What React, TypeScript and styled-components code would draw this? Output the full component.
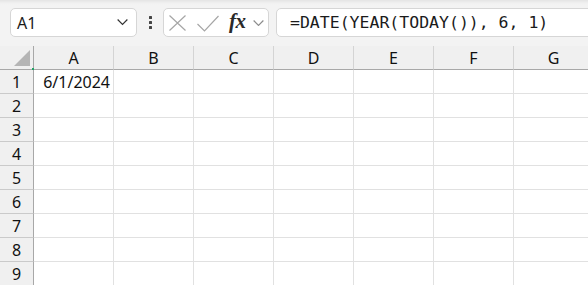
import React from "react";
import styled, { createGlobalStyle } from "styled-components";

const Global = createGlobalStyle`
  html, body { margin: 0; padding: 0; background: #ffffff; overflow: hidden; }
  #root { width: 588px; height: 285px; overflow: hidden; }
`;

const Page = styled.div`
  width: 588px;
  height: 285px;
  overflow: hidden;
  font-family: "Noto Sans", "Segoe UI", sans-serif;
  color: #1b1b1b;
`;

const Toolbar = styled.div`
  height: 46px;
  box-sizing: border-box;
  background: linear-gradient(#e4e4e4 0px, #f0f0f0 3px, #f3f3f3 5px);
  padding: 8px 0 0 10px;
  display: flex;
  align-items: flex-start;
`;

const Box = styled.div`
  height: 29px;
  box-sizing: border-box;
  background: #ffffff;
  border: 1px solid #d6d6d6;
  border-radius: 5px;
  display: flex;
  align-items: center;
`;

const NameBox = styled(Box)`
  width: 127px;
  padding: 0 8px 0 6px;
  justify-content: space-between;
  font-size: 16px;
`;

const DotsWrap = styled.div`
  width: 26px;
  height: 29px;
  display: flex;
  flex-direction: column;
  align-items: center;
  justify-content: center;
  gap: 2px;
`;

const Dot = styled.span`
  width: 3px;
  height: 3px;
  background: #444;
  border-radius: 0.5px;
`;

const FxBox = styled(Box)`
  width: 106px;
  padding: 1px 0 0 5px;
`;

const Fx = styled.span`
  font-family: "Liberation Serif", "Times New Roman", serif;
  font-style: italic;
  font-weight: bold;
  font-size: 21px;
  color: #2a2a2a;
  margin: -3px 7px 0 10px;
  letter-spacing: -0.5px;
`;

const FormulaBox = styled(Box)`
  flex: 1;
  margin-left: 7px;
  margin-right: -10px;
  padding-left: 13px;
  font-family: "DejaVu Sans Mono", "Liberation Mono", monospace;
  font-size: 16.5px;
  color: #1b1b1b;
`;

const Grid = styled.div`
  display: grid;
  grid-template-columns: 34px repeat(7, 80px);
  grid-auto-rows: 24px;
`;

const Cell = styled.div<{ $align?: "left" | "right" }>`
  box-sizing: border-box;
  border-right: 1px solid #e1e1e1;
  border-bottom: 1px solid #e1e1e1;
  display: flex;
  align-items: center;
  justify-content: ${(p) => (p.$align === "right" ? "flex-end" : "flex-start")};
  padding: 0 3px 0 3px;
  font-size: 16px;
  color: #111;
  line-height: 1;
`;

const ColHead = styled.div`
  box-sizing: border-box;
  background: #f0f0f0;
  border-right: 1px solid #d4d4d4;
  border-bottom: 1px solid #a8a8a8;
  display: flex;
  align-items: center;
  justify-content: center;
  font-size: 16px;
  color: #111;
  padding-top: 1px;
`;

const Corner = styled.div`
  box-sizing: border-box;
  background: #f0f0f0;
  border-right: 1px solid #a8a8a8;
  border-bottom: 1px solid #a8a8a8;
  display: flex;
  align-items: flex-end;
  justify-content: flex-end;
  padding: 0 3px 3px 0;
  position: relative;
`;

const Triangle = styled.div`
  width: 0;
  height: 0;
  border-left: 16px solid transparent;
  border-bottom: 16px solid #b5b5b5;
`;

const SelMark = styled.span`
  position: absolute;
  right: -1px;
  bottom: -1px;
  width: 2px;
  height: 2px;
  background: #21a366;
`;

const RowHead = styled.div`
  box-sizing: border-box;
  background: #f0f0f0;
  border-right: 1px solid #a8a8a8;
  border-bottom: 1px solid #cacaca;
  display: flex;
  align-items: center;
  justify-content: center;
  font-size: 16px;
  color: #111;
  line-height: 1;
`;

const IconSlot = styled.span<{ $ml: number }>`
  display: flex;
  margin-left: ${(p) => p.$ml}px;
`;

const cols = ["A", "B", "C", "D", "E", "F", "G"];
const rows = [1, 2, 3, 4, 5, 6, 7, 8, 9];

const Chevron = ({ color, w }: { color: string; w: number }) => (
  <svg width={w} height={w / 2 + 1} viewBox="0 0 10 6" style={{ display: "block" }}>
    <polyline points="0.5,0.5 5,5 9.5,0.5" fill="none" stroke={color} strokeWidth="1.1" />
  </svg>
);

const CancelIcon = () => (
  <svg width="17" height="16" viewBox="0 0 17 16" style={{ display: "block" }}>
    <path d="M0.5 0.5 L16.5 15.5 M16.5 0.5 L0.5 15.5" stroke="#a6a6a6" strokeWidth="1.2" fill="none" />
  </svg>
);

const CheckIcon = () => (
  <svg width="22" height="17" viewBox="0 0 22 17" style={{ display: "block" }}>
    <polyline points="0.5,9 7.5,16 21.5,1" fill="none" stroke="#a6a6a6" strokeWidth="1.2" />
  </svg>
);

export default function App() {
  return (
    <Page>
      <Global />
      <Toolbar>
        <NameBox>
          <span>A1</span>
          <Chevron color="#333" w={11} />
        </NameBox>
        <DotsWrap>
          <Dot />
          <Dot />
          <Dot />
        </DotsWrap>
        <FxBox>
          <IconSlot $ml={0}>
            <CancelIcon />
          </IconSlot>
          <IconSlot $ml={11}>
            <CheckIcon />
          </IconSlot>
          <Fx>fx</Fx>
          <Chevron color="#8c8c8c" w={11} />
        </FxBox>
        <FormulaBox>=DATE(YEAR(TODAY()), 6, 1)</FormulaBox>
      </Toolbar>
      <Grid>
        <Corner>
          <Triangle />
          <SelMark />
        </Corner>
        {cols.map((c) => (
          <ColHead key={c}>{c}</ColHead>
        ))}
        {rows.map((r) => (
          <React.Fragment key={r}>
            <RowHead>{r}</RowHead>
            {cols.map((c) => (
              <Cell key={c} $align={r === 1 && c === "A" ? "right" : "left"}>
                {r === 1 && c === "A" ? "6/1/2024" : ""}
              </Cell>
            ))}
          </React.Fragment>
        ))}
      </Grid>
    </Page>
  );
}
